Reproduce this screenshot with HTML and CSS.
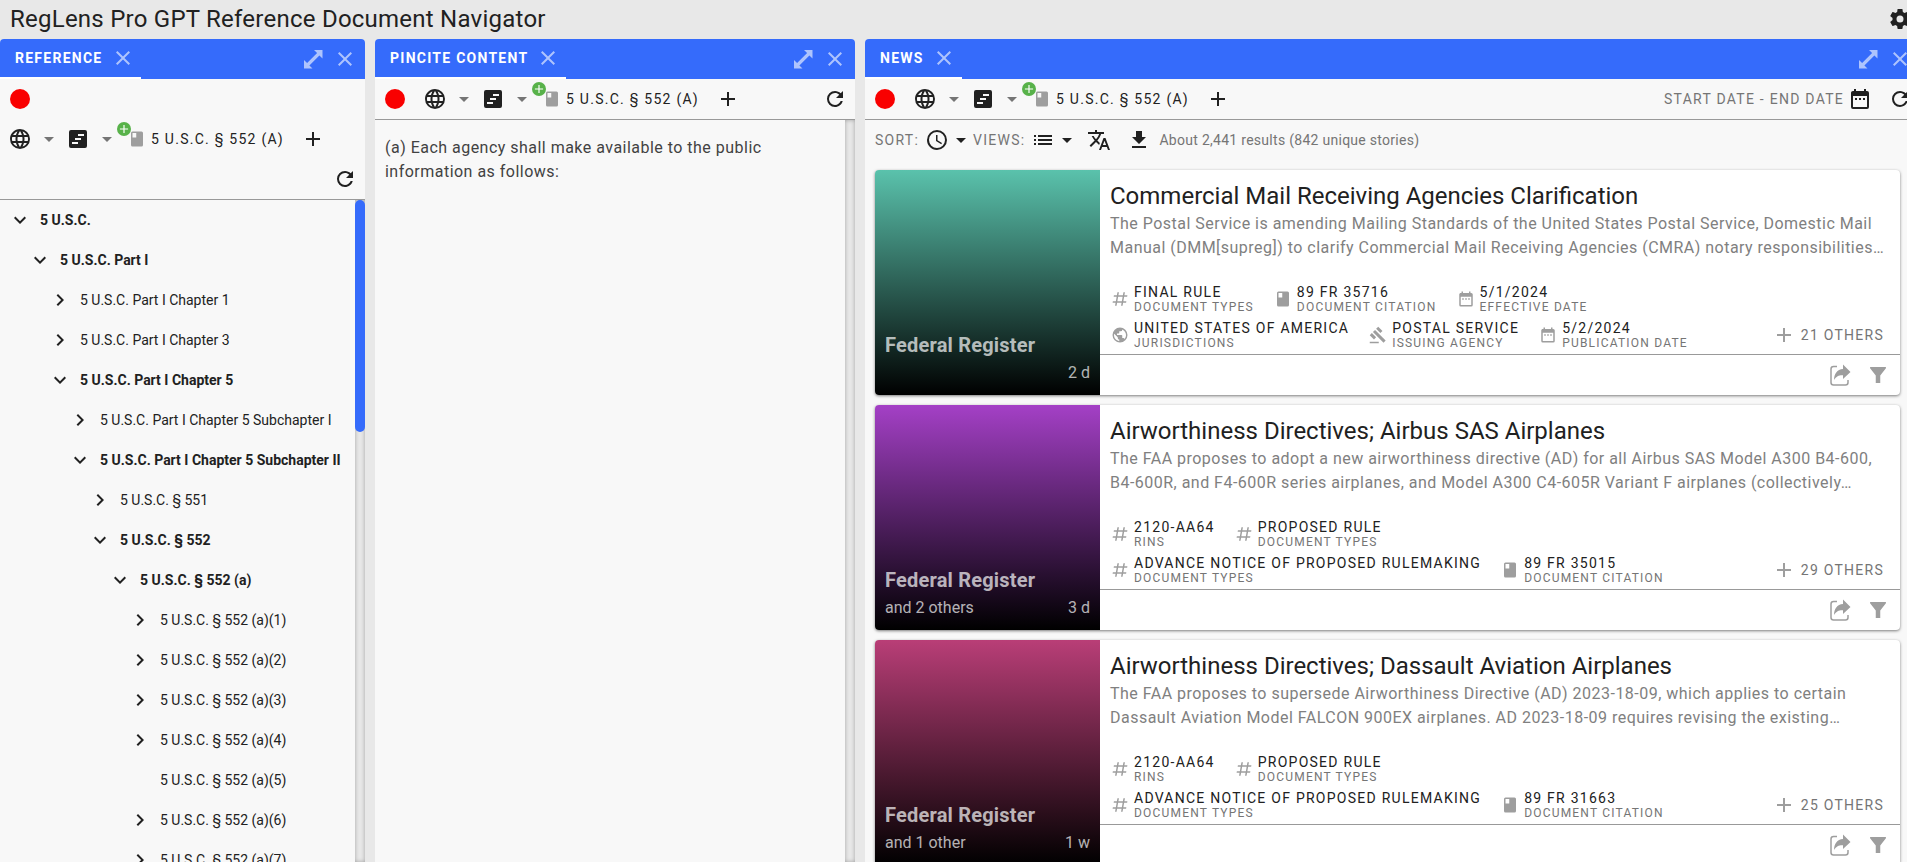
FILE: index.html
```html
<!DOCTYPE html>
<html lang="en">
<head>
<meta charset="utf-8">
<title>RegLens Pro GPT Reference Document Navigator</title>
<link rel="stylesheet" href="styles.css">
</head>
<body>
<svg class="sprite" aria-hidden="true">
  <symbol id="close" viewBox="0 0 24 24"><path d="M19,6.41L17.59,5L12,10.59L6.41,5L5,6.41L10.59,12L5,17.59L6.41,19L12,13.41L17.59,19L19,17.59L13.41,12L19,6.41Z"/></symbol>
  <symbol id="expand" viewBox="0 0 24 24"><path d="M13,3H21.500V11.500L18.400,8.400L8.400,18.400L11.500,21.500H3V13L6.100,16.100L16.100,6.100Z"/></symbol>
  <symbol id="circle" viewBox="0 0 24 24"><circle cx="12" cy="12" r="10"/></symbol>
  <symbol id="web" viewBox="0 0 24 24"><path d="M16.36,14C16.44,13.34 16.5,12.68 16.5,12C16.5,11.32 16.44,10.66 16.36,10H19.74C19.9,10.64 20,11.31 20,12C20,12.69 19.9,13.36 19.74,14M14.59,19.56C15.19,18.45 15.65,17.25 15.97,16H18.92C17.96,17.65 16.43,18.93 14.59,19.56M14.34,14H9.66C9.56,13.34 9.5,12.68 9.5,12C9.5,11.32 9.56,10.65 9.66,10H14.34C14.43,10.65 14.5,11.32 14.5,12C14.5,12.68 14.43,13.34 14.34,14M12,19.96C11.17,18.76 10.5,17.43 10.09,16H13.91C13.5,17.43 12.83,18.76 12,19.96M8,8H5.08C6.03,6.34 7.57,5.06 9.4,4.44C8.8,5.55 8.35,6.75 8,8M5.08,16H8C8.35,17.25 8.8,18.45 9.4,19.56C7.57,18.93 6.03,17.65 5.08,16M4.26,14C4.1,13.36 4,12.69 4,12C4,11.31 4.1,10.64 4.26,10H7.64C7.56,10.66 7.5,11.32 7.5,12C7.5,12.68 7.56,13.34 7.64,14M12,4.03C12.83,5.23 13.5,6.57 13.91,8H10.09C10.5,6.57 11.17,5.23 12,4.03M18.92,8H15.97C15.65,6.75 15.19,5.55 14.59,4.44C16.43,5.07 17.96,6.34 18.92,8M12,2C6.47,2 2,6.5 2,12A10,10 0 0,0 12,22A10,10 0 0,0 22,12A10,10 0 0,0 12,2Z"/></symbol>
  <symbol id="textbox" viewBox="0 0 24 24"><path fill-rule="evenodd" d="M5,3H19A2,2 0 0,1 21,5V19A2,2 0 0,1 19,21H5A2,2 0 0,1 3,19V5A2,2 0 0,1 5,3M12,7V9H18V7M9,11V13H15V11M6,15V17H12V15Z"/></symbol>
  <symbol id="down" viewBox="0 0 24 24"><path d="M7,10L12,15L17,10H7Z"/></symbol>
  <symbol id="book" viewBox="0 0 24 24"><path fill-rule="evenodd" d="M18,22A2,2 0 0,0 20,20V4A2,2 0 0,0 18,2H6A2,2 0 0,0 4,4V20A2,2 0 0,0 6,22H18M6,4H11V10H6Z"/></symbol>
  <symbol id="plus" viewBox="0 0 24 24"><path d="M19,13H13V19H11V13H5V11H11V5H13V11H19V13Z"/></symbol>
  <symbol id="refresh" viewBox="0 0 24 24"><path d="M17.65,6.35C16.2,4.9 14.21,4 12,4A8,8 0 0,0 4,12A8,8 0 0,0 12,20C15.73,20 18.84,17.45 19.73,14H17.65C16.83,16.33 14.61,18 12,18A6,6 0 0,1 6,12A6,6 0 0,1 12,6C13.66,6 15.14,6.69 16.22,7.78L13,11H20V4L17.65,6.35Z"/></symbol>
  <symbol id="cog" viewBox="0 0 24 24"><path d="M12,15.5A3.5,3.5 0 0,1 8.5,12A3.5,3.5 0 0,1 12,8.5A3.5,3.5 0 0,1 15.5,12A3.5,3.5 0 0,1 12,15.5M19.43,12.97C19.47,12.65 19.5,12.33 19.5,12C19.5,11.67 19.47,11.34 19.43,11L21.54,9.37C21.73,9.22 21.78,8.95 21.66,8.73L19.66,5.27C19.54,5.05 19.27,4.96 19.05,5.05L16.56,6.05C16.04,5.66 15.5,5.32 14.87,5.07L14.5,2.42C14.46,2.18 14.25,2 14,2H10C9.75,2 9.54,2.18 9.5,2.42L9.13,5.07C8.5,5.32 7.96,5.66 7.44,6.05L4.95,5.05C4.73,4.96 4.46,5.05 4.34,5.27L2.34,8.73C2.21,8.95 2.27,9.22 2.46,9.37L4.57,11C4.53,11.34 4.5,11.67 4.5,12C4.5,12.33 4.53,12.65 4.57,12.97L2.46,14.63C2.27,14.78 2.21,15.05 2.34,15.27L4.34,18.73C4.46,18.95 4.73,19.03 4.95,18.95L7.44,17.94C7.96,18.34 8.5,18.68 9.13,18.93L9.5,21.58C9.54,21.82 9.75,22 10,22H14C14.25,22 14.46,21.82 14.5,21.58L14.87,18.93C15.5,18.67 16.04,18.34 16.56,17.94L19.05,18.95C19.27,19.03 19.54,18.95 19.66,18.73L21.66,15.27C21.78,15.05 21.73,14.78 21.54,14.63L19.43,12.97Z"/></symbol>
  <symbol id="calendar" viewBox="0 0 24 24"><path d="M9,11H7V13H9V11M13,11H11V13H13V11M17,11H15V13H17V11M19,4H18V2H16V4H8V2H6V4H5C3.89,4 3,4.9 3,6V20A2,2 0 0,0 5,22H19A2,2 0 0,0 21,20V6A2,2 0 0,0 19,4M19,20H5V9H19V20Z"/></symbol>
  <symbol id="clock" viewBox="0 0 24 24"><path d="M12,20A8,8 0 0,0 20,12A8,8 0 0,0 12,4A8,8 0 0,0 4,12A8,8 0 0,0 12,20M12,2A10,10 0 0,1 22,12A10,10 0 0,1 12,22C6.47,22 2,17.5 2,12A10,10 0 0,1 12,2M12.5,7V12.25L17,14.92L16.25,16.15L11,13V7H12.5Z"/></symbol>
  <symbol id="list" viewBox="0 0 24 24"><path d="M3 13h2v-2H3v2zm0 4h2v-2H3v2zm0-8h2V7H3v2zm4 4h14v-2H7v2zm0 4h14v-2H7v2zM7 7v2h14V7H7z"/></symbol>
  <symbol id="translate" viewBox="0 0 24 24"><path d="M12.87,15.07L10.33,12.56L10.36,12.53C12.1,10.59 13.34,8.36 14.07,6H17V4H10V2H8V4H1V6H12.17C11.5,7.92 10.44,9.75 9,11.35C8.07,10.32 7.3,9.19 6.69,8H4.69C5.42,9.63 6.42,11.17 7.67,12.56L2.58,17.58L4,19L9,14L12.11,17.11L12.87,15.07M18.5,10H16.5L12,22H14L15.12,19H19.87L21,22H23L18.5,10M15.88,17L17.5,12.67L19.12,17H15.88Z"/></symbol>
  <symbol id="download" viewBox="0 0 24 24"><path d="M5,20H19V18H5M19,9H15V3H9V9H5L12,16L19,9Z"/></symbol>
  <symbol id="chev-right" viewBox="0 0 24 24"><path d="M8.59,16.58L13.17,12L8.59,7.41L10,6L16,12L10,18L8.59,16.58Z"/></symbol>
  <symbol id="chev-down" viewBox="0 0 24 24"><path d="M7.41,8.58L12,13.17L16.59,8.58L18,10L12,16L6,10L7.41,8.58Z"/></symbol>
  <symbol id="pound" viewBox="0 0 24 24"><path d="M5.41,21L6.12,17H2.12L2.47,15H6.47L7.53,9H3.53L3.88,7H7.88L8.59,3H10.59L9.88,7H15.88L16.59,3H18.59L17.88,7H21.88L21.53,9H17.53L16.47,15H20.47L20.12,17H16.12L15.41,21H13.41L14.12,17H8.12L7.41,21H5.41M9.53,9L8.47,15H14.47L15.53,9H9.53Z"/></symbol>
  <symbol id="earth" viewBox="0 0 24 24"><path d="M17.9,17.39C17.64,16.59 16.89,16 16,16H15V13A1,1 0 0,0 14,12H8V10H10A1,1 0 0,0 11,9V7H13A2,2 0 0,0 15,5V4.59C17.93,5.77 20,8.64 20,12C20,14.08 19.2,15.97 17.9,17.39M11,19.93C7.05,19.44 4,16.08 4,12C4,11.38 4.08,10.78 4.21,10.21L9,15V16A2,2 0 0,0 11,18M12,2A10,10 0 0,0 2,12A10,10 0 0,0 12,22A10,10 0 0,0 22,12A10,10 0 0,0 12,2Z"/></symbol>
  <symbol id="gavel" viewBox="0 0 24 24"><path d="M1 21h12v2H1zM5.245 8.07l2.83-2.827 14.14 14.142-2.828 2.828zM12.317 1l5.657 5.656-2.83 2.83-5.654-5.66zM3.825 9.485l5.657 5.657-2.828 2.828-5.657-5.657z"/></symbol>
  <symbol id="share" viewBox="0 0 24 24"><path fill="none" stroke="currentColor" stroke-width="1.500" d="M9,3.500H5.500A2.500,2.500 0 0,0 3,6V19.500A2.500,2.500 0 0,0 5.500,22H17.500A2.500,2.500 0 0,0 20,19.500V17"/><path d="M15,1.500L22.500,9L15,16V12.200C11,12 8.500,13 6,17C6,11 9,6.500 15,6Z"/></symbol>
  <symbol id="filter" viewBox="0 0 24 24"><path d="M2.500,2.500H21.500V4L14.700,12.500V21.500H9.300V12.500L2.500,4Z"/></symbol>
</svg>
<div class="app">
  <header class="topbar">
    <h1 class="app-title">RegLens Pro GPT Reference Document Navigator</h1>
    <button class="icon-btn" aria-label="Settings"><svg class="icon"><use href="#cog"/></svg></button>
  </header>
  <main class="panels">
    <section class="panel">
      <div class="tabbar">
        <div class="tab"><span class="tab-label">Reference</span><button class="tab-close" aria-label="Close tab"><svg class="icon"><use href="#close"/></svg></button></div>
        <div class="window-btns"><button class="win-btn" aria-label="Maximize"><svg class="icon"><use href="#expand"/></svg></button><button class="win-btn" aria-label="Close"><svg class="icon"><use href="#close"/></svg></button></div>
      </div>
      <div class="toolbar">
        <button class="icon-btn record" aria-label="Record"><svg class="icon"><use href="#circle"/></svg></button>
        <div class="tools">
          <button class="icon-btn" aria-label="Jurisdiction"><svg class="icon"><use href="#web"/></svg></button>
          <button class="drop" aria-label="Jurisdiction options"><svg class="icon"><use href="#down"/></svg></button>
          <button class="icon-btn" aria-label="Source"><svg class="icon"><use href="#textbox"/></svg></button>
          <button class="drop" aria-label="Source options"><svg class="icon"><use href="#down"/></svg></button>
          <button class="chip"><span class="chip-icon"><svg class="icon small"><use href="#book"/></svg><span class="badge"><svg class="icon tiny"><use href="#plus"/></svg></span></span>5 U.S.C. § 552 (a)</button>
          <button class="icon-btn" aria-label="Add"><svg class="icon"><use href="#plus"/></svg></button>
        </div>
        <div class="tools-end"><button class="icon-btn" aria-label="Refresh"><svg class="icon"><use href="#refresh"/></svg></button></div>
      </div>
      <div class="scroll-area">
        <ul class="tree">
          <li class="node open l0"><button class="twisty" aria-label="Collapse"><svg class="icon"><use href="#chev-down"/></svg></button><span>5 U.S.C.</span></li>
          <li class="node open l1"><button class="twisty" aria-label="Collapse"><svg class="icon"><use href="#chev-down"/></svg></button><span>5 U.S.C. Part I</span></li>
          <li class="node l2"><button class="twisty" aria-label="Expand"><svg class="icon"><use href="#chev-right"/></svg></button><span>5 U.S.C. Part I Chapter 1</span></li>
          <li class="node l2"><button class="twisty" aria-label="Expand"><svg class="icon"><use href="#chev-right"/></svg></button><span>5 U.S.C. Part I Chapter 3</span></li>
          <li class="node open l2"><button class="twisty" aria-label="Collapse"><svg class="icon"><use href="#chev-down"/></svg></button><span>5 U.S.C. Part I Chapter 5</span></li>
          <li class="node l3"><button class="twisty" aria-label="Expand"><svg class="icon"><use href="#chev-right"/></svg></button><span>5 U.S.C. Part I Chapter 5 Subchapter I</span></li>
          <li class="node open l3"><button class="twisty" aria-label="Collapse"><svg class="icon"><use href="#chev-down"/></svg></button><span>5 U.S.C. Part I Chapter 5 Subchapter II</span></li>
          <li class="node l4"><button class="twisty" aria-label="Expand"><svg class="icon"><use href="#chev-right"/></svg></button><span>5 U.S.C. § 551</span></li>
          <li class="node open l4"><button class="twisty" aria-label="Collapse"><svg class="icon"><use href="#chev-down"/></svg></button><span>5 U.S.C. § 552</span></li>
          <li class="node open l5"><button class="twisty" aria-label="Collapse"><svg class="icon"><use href="#chev-down"/></svg></button><span>5 U.S.C. § 552 (a)</span></li>
          <li class="node l6"><button class="twisty" aria-label="Expand"><svg class="icon"><use href="#chev-right"/></svg></button><span>5 U.S.C. § 552 (a)(1)</span></li>
          <li class="node l6"><button class="twisty" aria-label="Expand"><svg class="icon"><use href="#chev-right"/></svg></button><span>5 U.S.C. § 552 (a)(2)</span></li>
          <li class="node l6"><button class="twisty" aria-label="Expand"><svg class="icon"><use href="#chev-right"/></svg></button><span>5 U.S.C. § 552 (a)(3)</span></li>
          <li class="node l6"><button class="twisty" aria-label="Expand"><svg class="icon"><use href="#chev-right"/></svg></button><span>5 U.S.C. § 552 (a)(4)</span></li>
          <li class="node l6"><span class="twisty"></span><span>5 U.S.C. § 552 (a)(5)</span></li>
          <li class="node l6"><button class="twisty" aria-label="Expand"><svg class="icon"><use href="#chev-right"/></svg></button><span>5 U.S.C. § 552 (a)(6)</span></li>
          <li class="node l6"><button class="twisty" aria-label="Expand"><svg class="icon"><use href="#chev-right"/></svg></button><span>5 U.S.C. § 552 (a)(7)</span></li>
        </ul>
        <div class="track"><div class="thumb"></div></div>
      </div>
    </section>

    <section class="panel">
      <div class="tabbar">
        <div class="tab"><span class="tab-label">Pincite Content</span><button class="tab-close" aria-label="Close tab"><svg class="icon"><use href="#close"/></svg></button></div>
        <div class="window-btns"><button class="win-btn" aria-label="Maximize"><svg class="icon"><use href="#expand"/></svg></button><button class="win-btn" aria-label="Close"><svg class="icon"><use href="#close"/></svg></button></div>
      </div>
      <div class="toolbar">
        <button class="icon-btn record" aria-label="Record"><svg class="icon"><use href="#circle"/></svg></button>
        <div class="tools">
          <button class="icon-btn" aria-label="Jurisdiction"><svg class="icon"><use href="#web"/></svg></button>
          <button class="drop" aria-label="Jurisdiction options"><svg class="icon"><use href="#down"/></svg></button>
          <button class="icon-btn" aria-label="Source"><svg class="icon"><use href="#textbox"/></svg></button>
          <button class="drop" aria-label="Source options"><svg class="icon"><use href="#down"/></svg></button>
          <button class="chip"><span class="chip-icon"><svg class="icon small"><use href="#book"/></svg><span class="badge"><svg class="icon tiny"><use href="#plus"/></svg></span></span>5 U.S.C. § 552 (a)</button>
          <button class="icon-btn" aria-label="Add"><svg class="icon"><use href="#plus"/></svg></button>
        </div>
        <div class="tools-end"><button class="icon-btn" aria-label="Refresh"><svg class="icon"><use href="#refresh"/></svg></button></div>
      </div>
      <div class="scroll-area">
        <p class="pincite">(a) Each agency shall make available to the public information as follows:</p>
        <div class="track"></div>
      </div>
    </section>

    <section class="panel">
      <div class="tabbar">
        <div class="tab"><span class="tab-label">News</span><button class="tab-close" aria-label="Close tab"><svg class="icon"><use href="#close"/></svg></button></div>
        <div class="window-btns"><button class="win-btn" aria-label="Maximize"><svg class="icon"><use href="#expand"/></svg></button><button class="win-btn" aria-label="Close"><svg class="icon"><use href="#close"/></svg></button></div>
      </div>
      <div class="toolbar">
        <button class="icon-btn record" aria-label="Record"><svg class="icon"><use href="#circle"/></svg></button>
        <div class="tools">
          <button class="icon-btn" aria-label="Jurisdiction"><svg class="icon"><use href="#web"/></svg></button>
          <button class="drop" aria-label="Jurisdiction options"><svg class="icon"><use href="#down"/></svg></button>
          <button class="icon-btn" aria-label="Source"><svg class="icon"><use href="#textbox"/></svg></button>
          <button class="drop" aria-label="Source options"><svg class="icon"><use href="#down"/></svg></button>
          <button class="chip"><span class="chip-icon"><svg class="icon small"><use href="#book"/></svg><span class="badge"><svg class="icon tiny"><use href="#plus"/></svg></span></span>5 U.S.C. § 552 (a)</button>
          <button class="icon-btn" aria-label="Add"><svg class="icon"><use href="#plus"/></svg></button>
        </div>
        <div class="tools-end">
          <button class="dates">Start date - End date<svg class="icon"><use href="#calendar"/></svg></button>
          <button class="icon-btn" aria-label="Refresh"><svg class="icon"><use href="#refresh"/></svg></button>
        </div>
      </div>
      <div class="listbar">
        <button class="menu-btn"><span class="menu-label">Sort:</span><svg class="icon"><use href="#clock"/></svg><svg class="icon"><use href="#down"/></svg></button>
        <button class="menu-btn"><span class="menu-label">Views:</span><svg class="icon"><use href="#list"/></svg><svg class="icon"><use href="#down"/></svg></button>
        <button class="icon-btn" aria-label="Translate"><svg class="icon"><use href="#translate"/></svg></button>
        <button class="icon-btn" aria-label="Download"><svg class="icon"><use href="#download"/></svg></button>
        <span class="count">About 2,441 results (842 unique stories)</span>
      </div>
      <div class="cards">
        <article class="card">
          <div class="cover teal"><strong class="source">Federal Register</strong><div class="cover-row"><span></span><span>2 d</span></div></div>
          <div class="card-main">
            <div class="card-body">
              <h2 class="card-title">Commercial Mail Receiving Agencies Clarification</h2>
              <p class="summary">The Postal Service is amending Mailing Standards of the United States Postal Service, Domestic Mail Manual (DMM[supreg]) to clarify Commercial Mail Receiving Agencies (CMRA) notary responsibilities…</p>
              <div class="meta-row">
                <div class="meta"><svg class="icon small"><use href="#pound"/></svg><div><div class="value">Final Rule</div><div class="label">Document Types</div></div></div>
                <div class="meta"><svg class="icon small"><use href="#book"/></svg><div><div class="value">89 FR 35716</div><div class="label">Document Citation</div></div></div>
                <div class="meta"><svg class="icon small"><use href="#calendar"/></svg><div><div class="value">5/1/2024</div><div class="label">Effective Date</div></div></div>
              </div>
              <div class="meta-row">
                <div class="meta"><svg class="icon small"><use href="#earth"/></svg><div><div class="value">United States of America</div><div class="label">Jurisdictions</div></div></div>
                <div class="meta"><svg class="icon small"><use href="#gavel"/></svg><div><div class="value">Postal Service</div><div class="label">Issuing Agency</div></div></div>
                <div class="meta"><svg class="icon small"><use href="#calendar"/></svg><div><div class="value">5/2/2024</div><div class="label">Publication Date</div></div></div>
                <button class="others"><svg class="icon"><use href="#plus"/></svg>21 others</button>
              </div>
            </div>
            <div class="actions"><button class="act" aria-label="Share"><svg class="icon"><use href="#share"/></svg></button><button class="act" aria-label="Filter"><svg class="icon medium"><use href="#filter"/></svg></button></div>
          </div>
        </article>
        <article class="card">
          <div class="cover purple"><strong class="source">Federal Register</strong><div class="cover-row"><span>and 2 others</span><span>3 d</span></div></div>
          <div class="card-main">
            <div class="card-body">
              <h2 class="card-title">Airworthiness Directives; Airbus SAS Airplanes</h2>
              <p class="summary">The FAA proposes to adopt a new airworthiness directive (AD) for all Airbus SAS Model A300 B4-600, B4-600R, and F4-600R series airplanes, and Model A300 C4-605R Variant F airplanes (collectively…</p>
              <div class="meta-row">
                <div class="meta"><svg class="icon small"><use href="#pound"/></svg><div><div class="value">2120-AA64</div><div class="label">RINs</div></div></div>
                <div class="meta"><svg class="icon small"><use href="#pound"/></svg><div><div class="value">Proposed Rule</div><div class="label">Document Types</div></div></div>
              </div>
              <div class="meta-row">
                <div class="meta"><svg class="icon small"><use href="#pound"/></svg><div><div class="value">Advance Notice of Proposed Rulemaking</div><div class="label">Document Types</div></div></div>
                <div class="meta"><svg class="icon small"><use href="#book"/></svg><div><div class="value">89 FR 35015</div><div class="label">Document Citation</div></div></div>
                <button class="others"><svg class="icon"><use href="#plus"/></svg>29 others</button>
              </div>
            </div>
            <div class="actions"><button class="act" aria-label="Share"><svg class="icon"><use href="#share"/></svg></button><button class="act" aria-label="Filter"><svg class="icon medium"><use href="#filter"/></svg></button></div>
          </div>
        </article>
        <article class="card">
          <div class="cover pink"><strong class="source">Federal Register</strong><div class="cover-row"><span>and 1 other</span><span>1 w</span></div></div>
          <div class="card-main">
            <div class="card-body">
              <h2 class="card-title">Airworthiness Directives; Dassault Aviation Airplanes</h2>
              <p class="summary">The FAA proposes to supersede Airworthiness Directive (AD) 2023-18-09, which applies to certain Dassault Aviation Model FALCON 900EX airplanes. AD 2023-18-09 requires revising the existing…</p>
              <div class="meta-row">
                <div class="meta"><svg class="icon small"><use href="#pound"/></svg><div><div class="value">2120-AA64</div><div class="label">RINs</div></div></div>
                <div class="meta"><svg class="icon small"><use href="#pound"/></svg><div><div class="value">Proposed Rule</div><div class="label">Document Types</div></div></div>
              </div>
              <div class="meta-row">
                <div class="meta"><svg class="icon small"><use href="#pound"/></svg><div><div class="value">Advance Notice of Proposed Rulemaking</div><div class="label">Document Types</div></div></div>
                <div class="meta"><svg class="icon small"><use href="#book"/></svg><div><div class="value">89 FR 31663</div><div class="label">Document Citation</div></div></div>
                <button class="others"><svg class="icon"><use href="#plus"/></svg>25 others</button>
              </div>
            </div>
            <div class="actions"><button class="act" aria-label="Share"><svg class="icon"><use href="#share"/></svg></button><button class="act" aria-label="Filter"><svg class="icon medium"><use href="#filter"/></svg></button></div>
          </div>
        </article>
      </div>
    </section>
  </main>
</div>
</body>
</html>
```
FILE: styles.css
```css
* { box-sizing: border-box; }
html, body { height: 100%; }
body {
  margin: 0;
  overflow: hidden;
  background: #e8e8e8;
  color: #212121;
  font-family: Roboto, "Liberation Sans", sans-serif;
  font-size: 14px;
  line-height: 20px;
}
h1, h2, p, ul { margin: 0; padding: 0; }
button {
  margin: 0;
  padding: 0;
  border: 0;
  background: none;
  color: inherit;
  font: inherit;
  cursor: pointer;
}
.sprite { display: none; }
.icon { display: block; flex: none; width: 24px; height: 24px; fill: currentColor; }
.icon.medium { width: 20px; height: 20px; }
.icon.small { width: 18px; height: 18px; }
.icon.tiny { width: 14px; height: 14px; }

.app { display: flex; flex-direction: column; width: calc(100% + 13px); height: 100%; }
.topbar { display: flex; align-items: center; justify-content: space-between; flex: none; height: 39px; padding: 0 0 2px 10px; }
.app-title { font-size: 24px; line-height: 32px; font-weight: 400; letter-spacing: 0.01em; }
.icon-btn { display: flex; align-items: center; justify-content: center; flex: none; width: 40px; height: 40px; }

.panels { display: grid; grid-template-columns: 365fr 480fr 1055fr; gap: 10px; flex: 1; min-height: 0; }
.panel { display: flex; flex-direction: column; min-width: 0; min-height: 0; background: #f8f8f8; border-radius: 4px 4px 0 0; overflow: hidden; }

.tabbar { display: flex; justify-content: space-between; flex: none; height: 40px; background: #356bfb; color: #fff; }
.tab { display: flex; align-items: center; gap: 8px; padding: 0 6px 0 15px; border-bottom: 2px solid #fff; }
.tab-label { font-weight: 700; letter-spacing: 0.09em; text-transform: uppercase; }
.tab-close, .win-btn { color: rgba(255, 255, 255, 0.6); }
.window-btns { display: flex; align-items: center; gap: 8px; padding-right: 8px; }

.toolbar { display: flex; flex-wrap: wrap; flex: none; border-bottom: 1px solid #999; }
.tools, .tools-end { display: flex; align-items: center; }
.tools-end { margin-left: auto; }
.record { color: #f90000; }
.drop { display: flex; justify-content: center; width: 18px; color: #757575; }
.chip { display: flex; align-items: center; gap: 5px; height: 40px; padding: 0 9px 0 12px; letter-spacing: 0.09em; text-transform: uppercase; }
.chip-icon { position: relative; color: #9e9e9e; }
.badge { position: absolute; top: -8px; left: -11px; border-radius: 50%; background: #58b24a; color: #fff; }
.dates { display: flex; align-items: center; gap: 4px; padding-right: 8px; color: #757575; letter-spacing: 0.09em; text-transform: uppercase; }
.dates .icon { color: #212121; }

.scroll-area { display: flex; flex: 1; min-height: 0; overflow: hidden; }
.track { flex: none; width: 10px; background: #e8e8e8; box-shadow: inset 0 0 4px rgba(0, 0, 0, 0.3); }
.thumb { height: 35%; border-radius: 5px; background: #356bfb; }

.tree { flex: 1; list-style: none; }
.node { display: flex; align-items: center; height: 40px; white-space: nowrap; }
.node.open { font-weight: 700; }
.twisty { display: flex; align-items: center; justify-content: center; flex: none; width: 40px; height: 40px; }
.l1 { padding-left: 20px; }
.l2 { padding-left: 40px; }
.l3 { padding-left: 60px; }
.l4 { padding-left: 80px; }
.l5 { padding-left: 100px; }
.l6 { padding-left: 120px; }

.pincite { flex: 1; padding: 16px 10px; font-size: 16px; line-height: 24px; letter-spacing: 0.03em; color: #424242; }

.listbar { display: flex; align-items: center; flex: none; height: 40px; padding-left: 10px; }
.menu-btn { display: flex; align-items: center; }
.menu-label { margin-right: 6px; color: #757575; letter-spacing: 0.09em; text-transform: uppercase; }
.count { color: #757575; letter-spacing: 0.02em; }

.cards { display: flex; flex-direction: column; gap: 10px; flex: 1; min-height: 0; padding: 10px 20px 0 10px; overflow: hidden; }
.card { display: flex; flex: none; min-height: 225px; border-radius: 4px; overflow: hidden; background: #fff; box-shadow: 0 1px 3px rgba(0, 0, 0, 0.5); }
.cover { display: flex; flex-direction: column; justify-content: flex-end; flex: none; width: 225px; padding: 10px; color: rgba(255, 255, 255, 0.7); font-size: 16px; line-height: 24px; }
.teal { background: linear-gradient(#5ac2ac, #000); }
.purple { background: linear-gradient(#a440c6, #000); }
.pink { background: linear-gradient(#b93e77, #000); }
.source { font-size: 20px; line-height: 32px; font-weight: 700; letter-spacing: 0.01em; }
.cover-row { display: flex; justify-content: space-between; }
.card-main { display: flex; flex-direction: column; flex: 1; min-width: 0; }
.card-body { display: flex; flex-direction: column; gap: 6px; flex: 1; padding: 10px 10px 4px; }
.card-title { font-size: 24px; line-height: 32px; font-weight: 400; }
.summary { margin: -6px 0 auto; color: #808080; font-size: 16px; line-height: 24px; letter-spacing: 0.03em; }
.meta-row { display: flex; gap: 20px; padding-left: 1px; }
.meta { display: flex; align-items: center; gap: 5px; }
.meta .icon { color: #9e9e9e; }
.value { line-height: 16px; letter-spacing: 0.09em; text-transform: uppercase; }
.label { color: #757575; font-size: 12px; line-height: 14px; letter-spacing: 0.1em; text-transform: uppercase; }
.others { display: flex; align-items: center; gap: 5px; margin-left: auto; padding-right: 6px; color: #757575; letter-spacing: 0.09em; text-transform: uppercase; }
.others .icon { color: #9e9e9e; }
.actions { display: flex; align-items: center; justify-content: flex-end; gap: 16px; height: 41px; padding-right: 12px; border-top: 1px solid #999; color: #9e9e9e; }
```
